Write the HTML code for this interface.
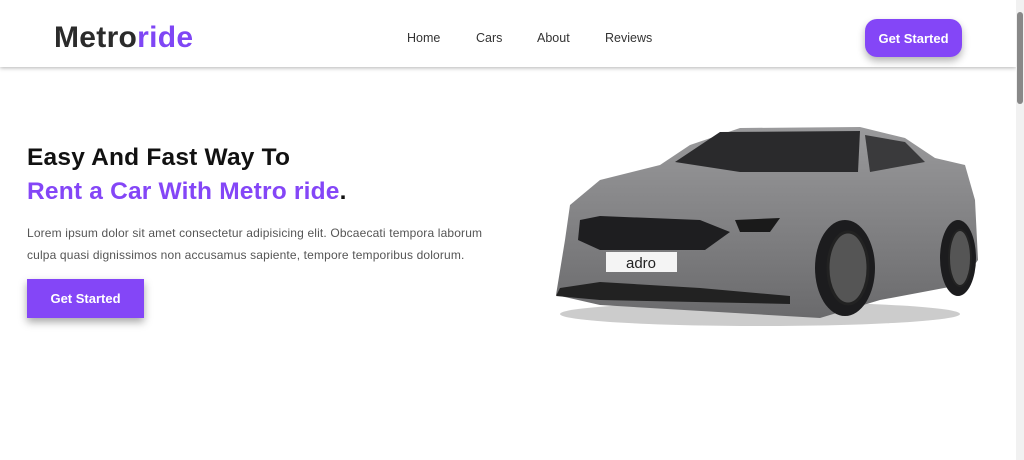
<!DOCTYPE html>
<html><head><meta charset="utf-8"><style>
*{margin:0;padding:0;box-sizing:border-box}
body{width:1024px;height:460px;overflow:hidden;background:#fff;font-family:"Liberation Sans",sans-serif;position:relative}
.hdr{position:absolute;left:0;top:0;width:1016px;height:67px;background:#fff;box-shadow:0 1px 4px rgba(0,0,0,.3)}
.logo{position:absolute;left:54px;top:21px;font-size:30px;font-weight:bold;color:#2b2b2b;letter-spacing:0.3px}
.logo span{color:#7f46f5}
.nav a{position:absolute;top:31px;font-size:12.5px;color:#333;text-decoration:none}
.btn{position:absolute;background:#8446f7;color:#fff;font-weight:bold;display:flex;align-items:center;justify-content:center}
.b1{left:865px;top:19px;width:97px;height:38px;border-radius:12px;font-size:13px;box-shadow:0 4px 8px rgba(0,0,0,.3)}
.b2{left:27px;top:279px;width:117px;height:39px;font-size:13px;box-shadow:0 4px 8px rgba(0,0,0,.35)}
h1{position:absolute;left:27px;font-size:24.5px;font-weight:bold;white-space:nowrap;letter-spacing:0.2px}
p{position:absolute;left:27px;top:223px;font-size:12px;line-height:21.5px;color:#555;white-space:nowrap;letter-spacing:0.15px}
.sb{position:absolute;left:1016px;top:0;width:8px;height:460px;background:#f1f1f1}
.sb div{position:absolute;left:1px;top:12px;width:6px;height:92px;background:#888;border-radius:3px}
</style></head><body>
<div class="hdr">
<div class="logo">Metro<span>ride</span></div>
<div class="nav"><a style="left:407px">Home</a><a style="left:476px">Cars</a><a style="left:537px">About</a><a style="left:605px">Reviews</a></div>
<div class="btn b1">Get Started</div>
</div>
<h1 style="top:144px;color:#111">Easy And Fast Way To</h1>
<h1 style="top:178px;color:#8446f7">Rent a Car With Metro ride<span style="color:#111">.</span></h1>
<p>Lorem ipsum dolor sit amet consectetur adipisicing elit. Obcaecati tempora laborum<br>culpa quasi dignissimos non accusamus sapiente, tempore temporibus dolorum.</p>
<div class="btn b2">Get Started</div>
<svg style="position:absolute;left:0;top:0" width="1016" height="460">
<defs><linearGradient id="g" x1="0" y1="0" x2="0" y2="1"><stop offset="0" stop-color="#9a9a9c"/><stop offset="1" stop-color="#6a6a6c"/></linearGradient></defs>
<ellipse cx="760" cy="314" rx="200" ry="12" fill="#333" opacity=".25"/>
<polygon points="570,205 600,180 660,165 690,145 740,128 860,127 905,138 935,158 965,165 975,200 978,260 960,285 880,300 820,318 600,305 556,295 565,240" fill="url(#g)"/>
<polygon points="675,162 720,132 860,131 858,172 740,172" fill="#2a2a2c"/>
<polygon points="865,135 905,142 925,162 870,172" fill="#3a3a3c"/>
<polygon points="580,220 600,216 700,220 730,232 705,250 600,250 578,240" fill="#1e1e20"/>
<rect x="606" y="252" width="71" height="20" fill="#f4f4f4"/>
<text x="641" y="268" font-size="15" font-family="Liberation Sans" text-anchor="middle" fill="#222">adro</text>
<polygon points="560,288 600,282 700,288 790,296 790,304 600,300 556,296" fill="#222"/>
<polygon points="735,220 780,218 770,232 740,232" fill="#1a1a1a"/>
<ellipse cx="845" cy="268" rx="30" ry="48" fill="#1c1c1e"/>
<ellipse cx="848" cy="268" rx="20" ry="36" fill="#555" stroke="#222" stroke-width="3"/>
<ellipse cx="958" cy="258" rx="18" ry="38" fill="#1c1c1e"/>
<ellipse cx="960" cy="258" rx="11" ry="28" fill="#555" stroke="#222" stroke-width="2"/>
</svg>
<div class="sb"><div></div></div>
</body></html>
